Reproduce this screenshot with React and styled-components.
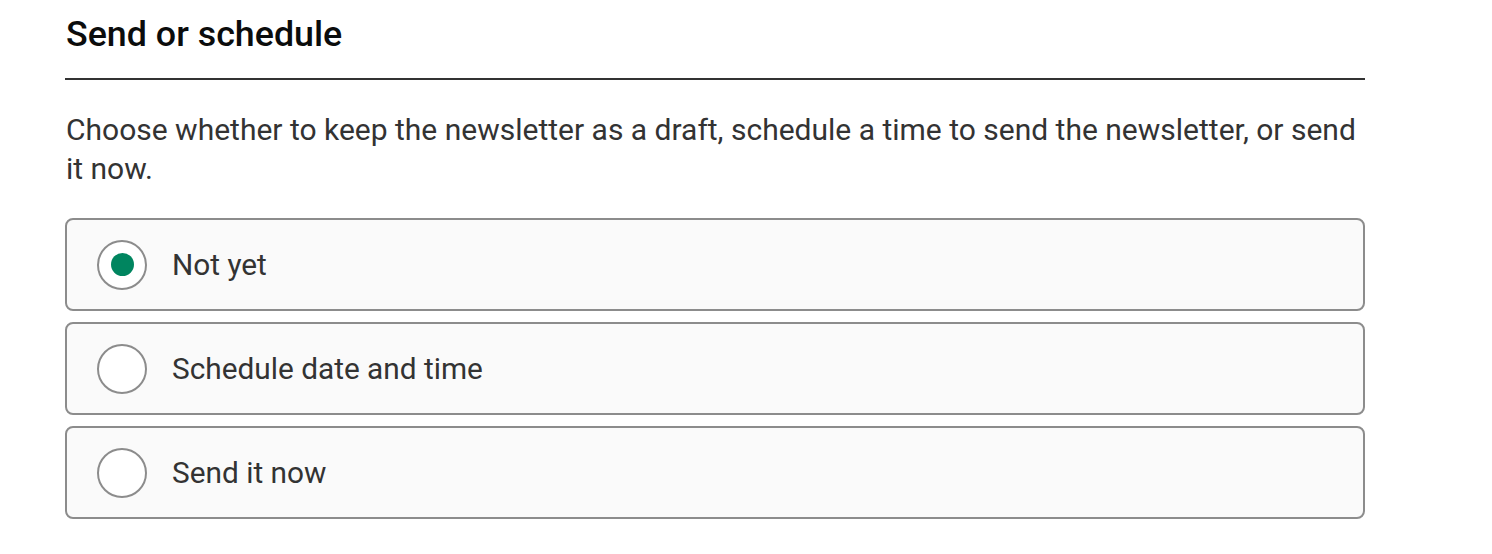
import { useState } from "react";
import styled, { createGlobalStyle } from "styled-components";

const GlobalStyle = createGlobalStyle`
  body {
    margin: 0;
    background: #ffffff;
    font-family: Roboto, "Liberation Sans", Arial, sans-serif;
  }
`;

const Page = styled.div`
  padding: 13px 0 0 65px;
  width: 1300px;
`;

const Heading = styled.h2`
  margin: 0;
  padding: 0 0 23px 1px;
  font-size: 35.8px;
  line-height: 42px;
  font-weight: 500;
  color: #0b0c0c;
  border-bottom: 2px solid #333333;
`;

const Intro = styled.p`
  margin: 30px 0 30px;
  padding-left: 1px;
  font-size: 30px;
  line-height: 39px;
  color: #333333;
`;

const Options = styled.div`
  display: flex;
  flex-direction: column;
  gap: 11px;
`;

const Option = styled.label`
  display: flex;
  align-items: center;
  gap: 25px;
  height: 93px;
  box-sizing: border-box;
  padding: 0 30px;
  background: #fafafa;
  border: 2px solid #8c8c8c;
  border-radius: 8px;
  cursor: pointer;
`;

const Radio = styled.span`
  flex: none;
  display: flex;
  align-items: center;
  justify-content: center;
  width: 50px;
  height: 50px;
  box-sizing: border-box;
  border: 2px solid #8c8c8c;
  border-radius: 50%;
  background: #ffffff;

  &::after {
    content: "";
    width: 23px;
    height: 23px;
    border-radius: 50%;
    background: ${(p) => (p.$checked ? "#00855f" : "transparent")};
  }
`;

const Label = styled.span`
  font-size: 29.8px;
  color: #333333;
`;

const choices = ["Not yet", "Schedule date and time", "Send it now"];

function App() {
  const [selected, setSelected] = useState(0);

  return (
    <Page>
      <GlobalStyle />
      <Heading>Send or schedule</Heading>
      <Intro>
        Choose whether to keep the newsletter as a draft, schedule a time to
        send the newsletter, or send it now.
      </Intro>
      <Options>
        {choices.map((choice, i) => (
          <Option key={choice} onClick={() => setSelected(i)}>
            <Radio $checked={selected === i} />
            <Label>{choice}</Label>
          </Option>
        ))}
      </Options>
    </Page>
  );
}

export default App;
